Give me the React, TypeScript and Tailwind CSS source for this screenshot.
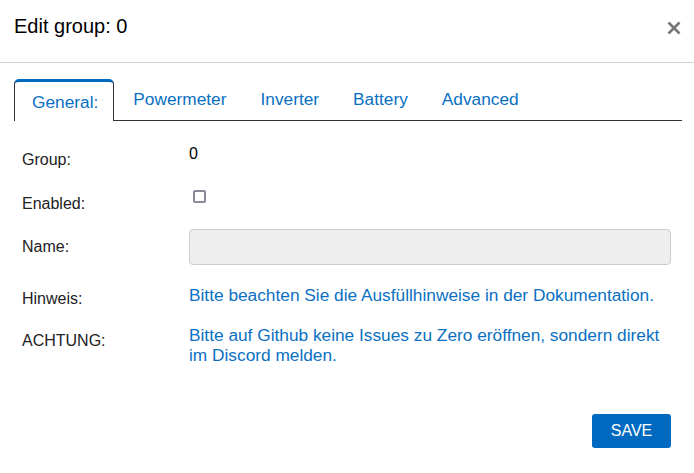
import React from 'react';

const tabs = ['Powermeter', 'Inverter', 'Battery', 'Advanced'];

const App: React.FC = () => {
  return (
    <div className="w-[694px] h-[473px] bg-white text-[#222] font-['Liberation_Sans',Arial,sans-serif] overflow-hidden">
      {/* Header */}
      <div className="h-[63px] border-b border-[#d2d2d2] flex items-start justify-between pl-[14px] pr-[13px] pt-[15px]">
        <h1 className="text-[20px] leading-[23px] text-black">Edit group: 0</h1>
        <button className="mt-[6px] text-[#777]" aria-label="Close">
          <svg width="14" height="14" viewBox="0 0 14 14">
            <path d="M1.5 1.5 L12.5 12.5 M12.5 1.5 L1.5 12.5" stroke="currentColor" strokeWidth="2.6" />
          </svg>
        </button>
      </div>

      {/* Tabs */}
      <div className="mt-[16px] ml-[14px] mr-[12px] h-[42px] flex items-end border-b border-[#333]">
        <div className="h-[42px] -mb-px mr-[2px] bg-white border border-[#333] border-b-0 border-t-[3px] border-t-[#0069c0] rounded-t-[5px] pl-[17px] pr-[15px] pt-[3px] flex items-center text-[17.3px] text-[#0a70c2]">
          General:
        </div>
        {tabs.map((t) => (
          <div key={t} className="px-[17px] pb-[11px] text-[17.3px] leading-[20px] text-[#0a70c2]">
            {t}
          </div>
        ))}
      </div>

      {/* Form */}
      <div className="pl-[22px] pr-[23px] text-[16px]">
        <div className="mt-[24px] h-[45px] flex items-start">
          <span className="w-[167px] pt-[6px] leading-[18px]">Group:</span>
          <span className="leading-[18px] text-black">0</span>
        </div>
        <div className="h-[39px] flex items-start">
          <span className="w-[167px] pt-[5px] leading-[18px]">Enabled:</span>
          <span className="ml-[4px] w-[13px] h-[13px] border-2 border-[#8a8a9a] rounded-[2px] bg-white" />
        </div>
        <div className="h-[56px] flex items-start">
          <span className="w-[167px] pt-[9px] leading-[18px]">Name:</span>
          <input
            readOnly
            className="flex-1 h-[36px] bg-[#eee] border border-[#ccc] rounded-[4px] outline-none"
          />
        </div>
        <div className="h-[40px] flex items-start">
          <span className="w-[167px] pt-[5px] leading-[18px]">Hinweis:</span>
          <span className="flex-1 text-[17.3px] leading-[20px] text-[#0a70c2]">
            Bitte beachten Sie die Ausfüllhinweise in der Dokumentation.
          </span>
        </div>
        <div className="flex items-start">
          <span className="w-[167px] pt-[7px] leading-[18px] shrink-0">ACHTUNG:</span>
          <span className="flex-1 text-[17.3px] leading-[20px] text-[#0a70c2]">
            Bitte auf Github keine Issues zu Zero eröffnen, sondern direkt im Discord melden.
          </span>
        </div>
        <div className="mt-[49px] flex justify-end">
          <button className="w-[79px] h-[34px] bg-[#0069c0] text-white text-[16px] rounded-[3px]">
            SAVE
          </button>
        </div>
      </div>
    </div>
  );
};

export default App;
